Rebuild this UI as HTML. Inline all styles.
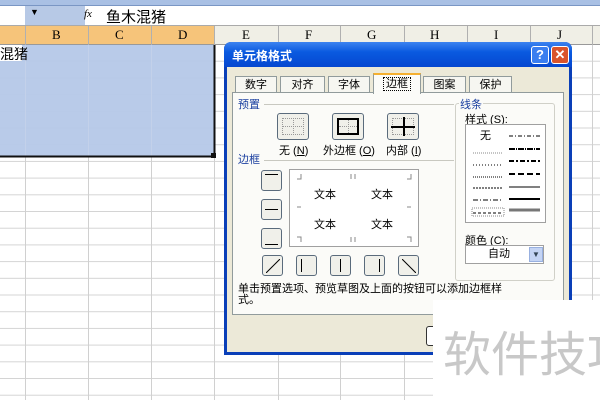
<!DOCTYPE html>
<html><head><meta charset="utf-8"><style>
*{margin:0;padding:0;box-sizing:border-box}
body{width:600px;height:400px;overflow:hidden;position:relative;background:#fff;font-family:"Liberation Sans","Noto Sans CJK SC",sans-serif;font-size:11px;color:#000}
.a{position:absolute}
.t{font-family:"Liberation Serif","Noto Serif CJK SC",serif}
.btn{position:absolute;width:21px;height:21px;border:1px solid #5a6b7c;border-radius:3px;background:#f0f0ea}
.btn i{position:absolute;left:3px;top:3px;width:13px;height:13px;border:1px dotted #999}
</style></head><body>
<div class="a" style="left:0;top:0;width:600px;height:6px;background:#a9c0e4;border-bottom:1px solid #7a96c4"></div>
<div class="a" style="left:0;top:6px;width:600px;height:20px;background:#fff;border-bottom:1px solid #aaa"></div>
<div class="a" style="left:25px;top:6px;width:60px;height:19px;background:#b7c9e6"></div>
<div class="a" style="left:30px;top:7px;font-size:9px">▼</div>
<div class="a t" style="left:84px;top:8px;font-size:11px;font-style:italic">fx</div>
<div class="a" style="left:106px;top:6px;font-size:15px">鱼木混猪</div>
<div class="a" style="left:0;top:26px;width:600px;height:19px;background:#f0efe6;border-bottom:1px solid #999"></div>
<div class="a" style="left:0;top:26px;width:214px;height:19px;background:#f6c47a;border-bottom:1px solid #999"></div>
<svg class="a" style="left:0;top:26px" width="600" height="374">
<g stroke="#b0b0b0" stroke-width="1">
<line x1="25.5" y1="0" x2="25.5" y2="19"/><line x1="88.5" y1="0" x2="88.5" y2="19"/><line x1="151.5" y1="0" x2="151.5" y2="19"/><line x1="214.5" y1="0" x2="214.5" y2="19"/><line x1="278.5" y1="0" x2="278.5" y2="19"/><line x1="340.5" y1="0" x2="340.5" y2="19"/><line x1="404.5" y1="0" x2="404.5" y2="19"/><line x1="467.5" y1="0" x2="467.5" y2="19"/><line x1="530.5" y1="0" x2="530.5" y2="19"/><line x1="592.5" y1="0" x2="592.5" y2="19"/>
</g></svg>
<div class="a t" style="top:27px;left:0;width:600px;font-size:13px">
<span class="a" style="left:52px">B</span><span class="a" style="left:115px">C</span><span class="a" style="left:178px">D</span><span class="a" style="left:242px">E</span><span class="a" style="left:305px">F</span><span class="a" style="left:367px">G</span><span class="a" style="left:430px">H</span><span class="a" style="left:494px">I</span><span class="a" style="left:557px">J</span></div>
<svg class="a" style="left:0;top:45px" width="600" height="355">
<defs><pattern id="r" width="600" height="16.7" patternUnits="userSpaceOnUse"><line x1="0" y1="16.2" x2="600" y2="16.2" stroke="#d4d4d4"/></pattern></defs>
<rect width="600" height="355" fill="url(#r)"/>
<g stroke="#d0d0d0"><line x1="25.5" y1="0" x2="25.5" y2="355"/><line x1="88.5" y1="0" x2="88.5" y2="355"/><line x1="151.5" y1="0" x2="151.5" y2="355"/><line x1="214.5" y1="0" x2="214.5" y2="355"/><line x1="278.5" y1="0" x2="278.5" y2="355"/><line x1="340.5" y1="0" x2="340.5" y2="355"/><line x1="404.5" y1="0" x2="404.5" y2="355"/><line x1="467.5" y1="0" x2="467.5" y2="355"/><line x1="530.5" y1="0" x2="530.5" y2="355"/><line x1="592.5" y1="0" x2="592.5" y2="355"/></g>
<rect x="0" y="0" width="214" height="111" fill="#b5c8e8" opacity="0.95"/>
<rect x="0" y="0" width="22" height="16" fill="#fff"/>
<g stroke="#c3d1ea"><line x1="25.5" y1="0" x2="25.5" y2="111"/><line x1="88.5" y1="0" x2="88.5" y2="111"/><line x1="151.5" y1="0" x2="151.5" y2="111"/></g>
<path d="M0 111.5H214.5V0" fill="none" stroke="#111" stroke-width="2"/>
<rect x="211" y="108" width="5" height="5" fill="#111"/>
</svg>
<div class="a" style="left:0;top:44px;font-size:14px">混猪</div>
<div class="a" style="left:224px;top:42px;width:348px;height:313px;background:#0a3fb8;border-radius:7px 7px 0 0"></div>
<div class="a" style="left:224px;top:42px;width:348px;height:25px;background:linear-gradient(#3d83f0,#0a5ae0 40%,#0547d0);border-radius:7px 7px 0 0"></div>
<div class="a" style="left:232px;top:47px;color:#fff;font-weight:bold;font-size:12px">单元格格式</div>
<div class="a" style="left:531px;top:46px;width:18px;height:18px;background:#3a7ef0;border:1px solid #fff;border-radius:3px;color:#fff;font-weight:bold;text-align:center;font-size:13px;line-height:16px">?</div>
<div class="a" style="left:551px;top:46px;width:18px;height:18px;background:#d9542c;border:1px solid #fff;border-radius:3px;color:#fff;font-weight:bold;text-align:center;font-size:13px;line-height:16px">✕</div>
<div class="a" style="left:227px;top:67px;width:342px;height:285px;background:#ece9d8"></div>
<div class="a" style="left:235px;top:76px;width:42px;height:17px;border:1px solid #919b9c;border-bottom:none;background:#f6f6f1;text-align:center;line-height:16px">数字</div>
<div class="a" style="left:280px;top:76px;width:45px;height:17px;border:1px solid #919b9c;border-bottom:none;background:#f6f6f1;text-align:center;line-height:16px">对齐</div>
<div class="a" style="left:328px;top:76px;width:42px;height:17px;border:1px solid #919b9c;border-bottom:none;background:#f6f6f1;text-align:center;line-height:16px">字体</div>
<div class="a" style="left:423px;top:76px;width:43px;height:17px;border:1px solid #919b9c;border-bottom:none;background:#f6f6f1;text-align:center;line-height:16px">图案</div>
<div class="a" style="left:469px;top:76px;width:43px;height:17px;border:1px solid #919b9c;border-bottom:none;background:#f6f6f1;text-align:center;line-height:16px">保护</div>
<div class="a" style="left:232px;top:92px;width:332px;height:223px;border:1px solid #919b9c;background:#fbfbf8"></div>
<div class="a" style="left:373px;top:73px;width:48px;height:21px;border:1px solid #919b9c;border-top:2px solid #f5b030;border-bottom:none;background:#fbfbf8;text-align:center;line-height:18px"><span style="border:1px dotted #000;padding:0 2px">边框</span></div>
<div class="a" style="left:238px;top:96px;color:#1a3fa0">预置</div>
<div class="a" style="left:264px;top:104px;width:190px;border-top:1px solid #c8c8c0"></div>
<div class="btn" style="left:277px;top:113px;width:32px;height:27px"><i style="left:4px;top:4px;width:22px;height:17px"></i><b class="a" style="left:15px;top:4px;height:17px;border-left:1px dotted #999"></b><b class="a" style="left:4px;top:12px;width:22px;border-top:1px dotted #999"></b></div>
<div class="btn" style="left:332px;top:113px;width:32px;height:27px"><i style="left:4px;top:4px;width:22px;height:17px;border:2px solid #000"></i><b class="a" style="left:15px;top:6px;height:13px;border-left:1px dotted #999"></b><b class="a" style="left:6px;top:12px;width:18px;border-top:1px dotted #999"></b></div>
<div class="btn" style="left:387px;top:113px;width:32px;height:27px"><i style="left:4px;top:4px;width:22px;height:17px"></i><b class="a" style="left:15px;top:3px;width:2px;height:19px;background:#000"></b><b class="a" style="left:3px;top:12px;width:24px;height:2px;background:#000"></b></div>
<div class="a" style="left:279px;top:142px">无 (<u>N</u>)</div>
<div class="a" style="left:323px;top:142px">外边框 (<u>O</u>)</div>
<div class="a" style="left:386px;top:142px">内部 (<u>I</u>)</div>
<div class="a" style="left:238px;top:151px;color:#1a3fa0">边框</div>
<div class="a" style="left:264px;top:160px;width:190px;border-top:1px solid #c8c8c0"></div>
<div class="btn" style="left:261px;top:170px"><b class="a" style="left:3px;top:3px;width:13px;height:1px;background:#000"></b></div>
<div class="btn" style="left:261px;top:199px"><b class="a" style="left:3px;top:9px;width:13px;height:1px;background:#000"></b></div>
<div class="btn" style="left:261px;top:228px"><b class="a" style="left:3px;top:15px;width:13px;height:1px;background:#000"></b></div>
<div class="btn" style="left:262px;top:255px"><svg class="a" style="left:3px;top:3px" width="14" height="14"><line x1="0" y1="14" x2="14" y2="0" stroke="#000"/></svg></div>
<div class="btn" style="left:296px;top:255px"><b class="a" style="left:4px;top:3px;width:1px;height:13px;background:#000"></b></div>
<div class="btn" style="left:330px;top:255px"><b class="a" style="left:9px;top:3px;width:1px;height:13px;background:#000"></b></div>
<div class="btn" style="left:364px;top:255px"><b class="a" style="left:14px;top:3px;width:1px;height:13px;background:#000"></b></div>
<div class="btn" style="left:398px;top:255px"><svg class="a" style="left:3px;top:3px" width="14" height="14"><line x1="0" y1="0" x2="14" y2="14" stroke="#000"/></svg></div>
<div class="a" style="left:289px;top:169px;width:130px;height:78px;background:#fff;border:1px solid #a0a0a0"></div>
<svg class="a" style="left:289px;top:169px" width="130" height="78"><g stroke="#888" fill="none">
<path d="M8 10H12V5M62 5V10M66 10V5M122 5V10H118M8 38H12M118 38H122M8 68H12V73M62 73V68M66 68V73M122 73V68H118"/></g></svg>
<div class="a" style="left:314px;top:186px">文本</div><div class="a" style="left:371px;top:186px">文本</div>
<div class="a" style="left:314px;top:216px">文本</div><div class="a" style="left:371px;top:216px">文本</div>
<div class="a" style="left:455px;top:103px;width:100px;height:178px;border:1px solid #d0d0c8;border-radius:3px"></div>
<div class="a" style="left:459px;top:96px;color:#1a3fa0;background:#fbfbf8;padding:0 1px">线条</div>
<div class="a" style="left:465px;top:111px">样式 (<u>S</u>):</div>
<div class="a" style="left:465px;top:124px;width:81px;height:99px;background:#fff;border:1px solid #a0a0a0"></div>
<div class="a" style="left:480px;top:127px">无</div>
<svg class="a" style="left:465px;top:124px" width="81" height="99">
<g stroke="#000">
<line x1="8" y1="53" x2="38" y2="53" stroke-dasharray="1 1"/>
<line x1="8" y1="64" x2="38" y2="64" stroke-dasharray="2 1"/>
<line x1="8" y1="76" x2="38" y2="76" stroke-dasharray="5 2 1 2"/>
<line x1="8" y1="89" x2="38" y2="89" stroke-dasharray="3 2"/>
<line x1="44" y1="12" x2="75" y2="12" stroke-dasharray="4 2 1 2"/>
<line x1="44" y1="25" x2="75" y2="25" stroke-width="2" stroke-dasharray="6 1 1 1"/>
<line x1="44" y1="37" x2="75" y2="37" stroke-width="2" stroke-dasharray="5 2 2 2"/>
<line x1="44" y1="50" x2="75" y2="50" stroke-width="2" stroke-dasharray="6 3"/>
<line x1="44" y1="63" x2="75" y2="63"/>
<line x1="44" y1="75" x2="75" y2="75" stroke-width="2"/>
<line x1="44" y1="86" x2="75" y2="86" stroke-width="3" stroke="#777"/>
<line x1="8" y1="29" x2="38" y2="29" stroke-dasharray="1 1" stroke="#888"/>
<line x1="8" y1="41" x2="38" y2="41" stroke-dasharray="1 2"/>
</g>
<rect x="7" y="84" width="32" height="8" fill="none" stroke="#888" stroke-dasharray="1 1"/>
</svg>
<div class="a" style="left:465px;top:232px">颜色 (<u>C</u>):</div>
<div class="a" style="left:465px;top:245px;width:79px;height:19px;background:#fff;border:1px solid #a0a0a0;padding-left:22px;line-height:17px">自动</div>
<div class="a" style="left:529px;top:247px;width:14px;height:15px;background:#c4d4f4;border:1px solid #98b0e0;font-size:8px;text-align:center;line-height:14px;color:#345">▼</div>
<div class="a" style="left:238px;top:284px;line-height:11px">单击预置选项、预览草图及上面的按钮可以添加边框样<br>式。</div>
<div class="a" style="left:426px;top:326px;width:20px;height:20px;border:1px solid #333;border-radius:3px;background:#fff"></div>
<div class="a" style="left:433px;top:300px;width:167px;height:100px;background:#fff;overflow:hidden"><div class="a" style="left:10px;top:22px;font-size:48px;color:#c8c8c8;white-space:nowrap;font-family:'Noto Sans CJK SC',sans-serif;line-height:56px">软件技巧</div></div>
</body></html>
